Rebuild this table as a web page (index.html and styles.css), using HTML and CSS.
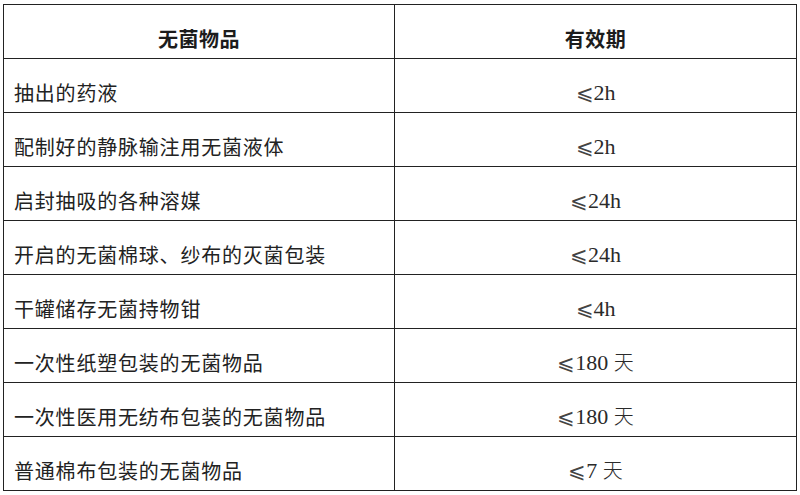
FILE: index.html
```html
<!DOCTYPE html>
<html lang="zh">
<head>
<meta charset="utf-8">
<link rel="stylesheet" href="styles.css">
</head>
<body>
<table class="sheet">
  <colgroup><col class="c1"><col class="c2"></colgroup>
  <thead>
    <tr><th>无菌物品</th><th>有效期</th></tr>
  </thead>
  <tbody>
    <tr><td class="item">抽出的药液</td><td class="term"><span class="le">⩽</span>2h</td></tr>
    <tr><td class="item">配制好的静脉输注用无菌液体</td><td class="term"><span class="le">⩽</span>2h</td></tr>
    <tr><td class="item">启封抽吸的各种溶媒</td><td class="term"><span class="le">⩽</span>24h</td></tr>
    <tr><td class="item">开启的无菌棉球、纱布的灭菌包装</td><td class="term"><span class="le">⩽</span>24h</td></tr>
    <tr><td class="item">干罐储存无菌持物钳</td><td class="term"><span class="le">⩽</span>4h</td></tr>
    <tr><td class="item">一次性纸塑包装的无菌物品</td><td class="term"><span class="le">⩽</span>180 <span class="cjk">天</span></td></tr>
    <tr><td class="item">一次性医用无纺布包装的无菌物品</td><td class="term"><span class="le">⩽</span>180 <span class="cjk">天</span></td></tr>
    <tr><td class="item">普通棉布包装的无菌物品</td><td class="term"><span class="le">⩽</span>7 <span class="cjk">天</span></td></tr>
  </tbody>
</table>
</body>
</html>
```
FILE: styles.css
```css
html, body {
  margin: 0;
  padding: 0;
  background: #fff;
}
body {
  padding: 4px 0 0 3px;
}
.sheet {
  border-collapse: collapse;
  width: 793px;
  table-layout: fixed;
  color: #1c1c1c;
}
.c1 { width: 391px; }
.c2 { width: 402px; }
.sheet th, .sheet td {
  border: 1px solid #222;
  height: 54px;
  box-sizing: border-box;
  vertical-align: bottom;
  padding: 0 0 7px 0;
  line-height: 24px;
  font-size: 20px;
}
.sheet th {
  font-family: "Noto Sans CJK SC", sans-serif;
  font-weight: 700;
  text-align: center;
  letter-spacing: 0.5px;
}
.item {
  font-family: "Noto Sans CJK SC", sans-serif;
  font-weight: 400;
  text-align: left;
  padding-left: 10px !important;
  letter-spacing: 0.8px;
  color: #222;
}
.sheet .term {
  font-family: "Liberation Serif", "Noto Sans CJK SC", serif;
  font-size: 22px;
  text-align: center;
  color: #2a2a2a;
}
.le {
  font-family: "DejaVu Serif", serif;
  font-size: 21px;
  font-weight: 300;
  color: #444;
}
.cjk {
  font-family: "Noto Sans CJK SC", sans-serif;
  font-size: 20px;
  font-weight: 300;
}
```
